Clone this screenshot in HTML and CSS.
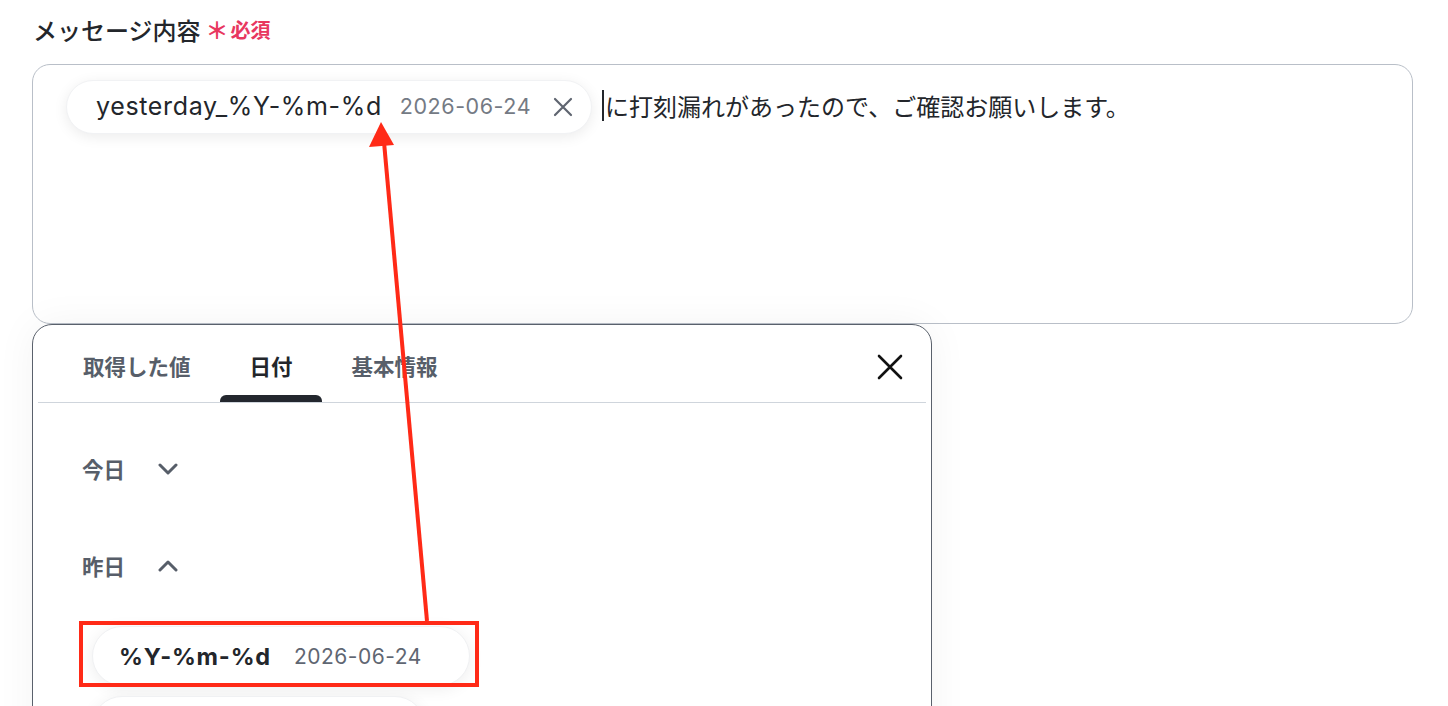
FILE: index.html
```html
<!DOCTYPE html>
<html lang="ja">
  <head>
    <meta charset="UTF-8" />
    <meta name="viewport" content="width=device-width, initial-scale=1.0" />
    <title>メッセージ内容</title>
    <link rel="stylesheet" href="styles.css">
  </head>

  <body>
    <div class="form-field">
      <div class="field-label">
        メッセージ内容
        <span class="required"><span class="required-mark">＊</span>必須</span>
      </div>

      <div class="editor">
        <div class="editor-line">
          <span class="token-chip">
            <span class="token-name">yesterday_%Y-%m-%d</span>
            <span class="token-value">2026-06-24</span>
            <button class="token-remove" aria-label="削除">
              <svg width="20" height="20" viewBox="0 0 20 20">
                <path d="M2 2 L18 18 M18 2 L2 18" stroke="currentColor" stroke-width="2.2" stroke-linecap="round" fill="none" />
              </svg>
            </button>
          </span>
          <span class="caret"></span>
          <span class="editor-text">に打刻漏れがあったので、ご確認お願いします。</span>
        </div>
      </div>

      <div class="picker">
        <div class="picker-head">
          <div class="tabs">
            <button class="tab"><span class="tab-label">取得した値</span><span class="tab-bar"></span></button>
            <button class="tab active"><span class="tab-label">日付</span><span class="tab-bar"></span></button>
            <button class="tab"><span class="tab-label">基本情報</span><span class="tab-bar"></span></button>
          </div>
          <button class="picker-close" aria-label="閉じる">
            <svg width="26" height="26" viewBox="0 0 26 26">
              <path d="M2 2 L24 24 M24 2 L2 24" stroke="currentColor" stroke-width="2.6" stroke-linecap="round" fill="none" />
            </svg>
          </button>
        </div>

        <div class="picker-body">
          <div class="group">
            <div class="group-head">
              今日
              <svg class="chevron" width="20" height="12" viewBox="0 0 20 12">
                <path d="M2 2 L10 10 L18 2" stroke="currentColor" stroke-width="3" stroke-linecap="round" stroke-linejoin="round" fill="none" />
              </svg>
            </div>
          </div>

          <div class="group">
            <div class="group-head">
              昨日
              <svg class="chevron" width="20" height="12" viewBox="0 0 20 12">
                <path d="M2 10 L10 2 L18 10" stroke="currentColor" stroke-width="3" stroke-linecap="round" stroke-linejoin="round" fill="none" />
              </svg>
            </div>
            <div class="group-items">
              <button class="value-chip">
                <span class="value-format">%Y-%m-%d</span>
                <span class="value-sample">2026-06-24</span>
              </button>
              <button class="value-chip next" aria-label="%Y%m%d"></button>
            </div>
          </div>
        </div>
      </div>
    </div>

    <!-- callout: highlighted item and where it ends up -->
    <svg class="callout" width="1448" height="706" viewBox="0 0 1448 706">
      <rect x="81" y="623" width="396" height="62" fill="none" stroke="#ff2a17" stroke-width="4" />
      <line x1="427" y1="621" x2="384" y2="142" stroke="#ff2a17" stroke-width="4" />
      <polygon points="381,122 369,147 394,145" fill="#ff2a17" />
    </svg>
  </body>
</html>
```

FILE: styles.css
```css
html,
body {
  margin: 0;
  height: 706px;
  overflow: hidden;
}

body {
  position: relative;
  font-family: Inter, "Noto Sans CJK JP", sans-serif;
  background-color: #fff;
  color: #23262b;
}

button {
  font: inherit;
  border: none;
  background: none;
  padding: 0;
  cursor: pointer;
}

.form-field {
  padding: 14px 35px 0 32px;
}

.field-label {
  display: flex;
  align-items: center;
  font-family: "Noto Sans CJK JP", sans-serif;
  font-size: 24px;
  font-weight: 500;
  line-height: 31px;
  padding-left: 1px;
}

.required {
  display: flex;
  align-items: center;
  margin-left: 5px;
  font-size: 20px;
  font-weight: 700;
  color: #e8375f;
}

.required-mark {
  font-size: 23px;
  margin-right: 2px;
}

/* editor box */
.editor {
  margin-top: 19px;
  height: 260px;
  box-sizing: border-box;
  border: 1px solid #b9bfc8;
  border-radius: 18px;
  padding: 15px 33px;
}

.editor-line {
  display: flex;
  align-items: center;
}

.token-chip {
  display: inline-flex;
  align-items: center;
  height: 54px;
  box-sizing: border-box;
  padding: 0 18px 2px 29px;
  border-radius: 27px;
  background-color: #fff;
  box-shadow: 0 3px 14px rgba(0, 0, 0, 0.08);
  border: 1px solid #f1f2f4;
}

.token-name {
  font-size: 25px;
  letter-spacing: 0.65px;
  color: #23262b;
}

.token-value {
  margin-left: 18px;
  font-size: 21.5px;
  letter-spacing: 0.55px;
  color: #747a84;
}

.token-remove {
  display: flex;
  margin: 2px 0 0 22px;
  color: #5f6570;
}

.caret {
  width: 2px;
  height: 31px;
  margin: 0 0 4px 10px;
  background-color: #23262b;
}

.editor-text {
  margin: 0 0 4px 1px;
  font-family: "Noto Sans CJK JP", sans-serif;
  font-size: 24px;
  color: #23262b;
}

/* value picker */
.picker {
  width: 900px;
  height: 420px;
  box-sizing: border-box;
  border: 1px solid #5a616c;
  border-radius: 20px 20px 0 0;
  background-color: #fff;
  box-shadow: 0 0 40px rgba(0, 0, 0, 0.05);
}

.picker-head {
  display: flex;
  justify-content: space-between;
  margin: 0 5px;
  border-bottom: 1px solid #cfd5dc;
}

.tabs {
  display: flex;
  padding-left: 15px;
}

.tab {
  display: flex;
  flex-direction: column;
  align-items: stretch;
  padding: 26px 29px 0 30px;
  font-family: "Noto Sans CJK JP", sans-serif;
  font-size: 21.5px;
  font-weight: 700;
  color: #575e69;
}

.tab-label {
  line-height: 30px;
  text-align: center;
}

.tab-bar {
  height: 7px;
  margin: 14px -29px 0 -30px;
  border-radius: 6px 6px 0 0;
}

.tab.active {
  color: #23262b;
}

.tab.active .tab-bar {
  background-color: #23272e;
}

.picker-close {
  display: flex;
  align-self: flex-start;
  margin: 29px 23px 0 0;
  color: #111;
}

.picker-body {
  padding-left: 49px;
}

.group-head {
  display: flex;
  align-items: center;
  padding: 51px 0 16px;
  font-family: "Noto Sans CJK JP", sans-serif;
  font-size: 21.5px;
  font-weight: 700;
  line-height: 30px;
  color: #575e69;
}

.chevron {
  margin-left: 33px;
  color: #575e69;
}

.group-items {
  display: flex;
  flex-direction: column;
  align-items: flex-start;
  gap: 10px;
  padding: 29px 0 0 10px;
}

.value-chip {
  display: flex;
  align-items: center;
  height: 60px;
  box-sizing: border-box;
  padding: 0 47px 0 26px;
  border-radius: 30px;
  background-color: #fff;
  border: 1px solid #f0f1f3;
  box-shadow: 0 3px 16px rgba(0, 0, 0, 0.07);
}

.value-chip.next {
  width: 333px;
}

.value-format {
  font-size: 23.5px;
  font-weight: 700;
  letter-spacing: 0.8px;
  color: #23262b;
}

.value-sample {
  margin-left: 23px;
  font-size: 21px;
  letter-spacing: 0.5px;
  color: #5f6672;
}

/* overlay drawn on top of the form */
.callout {
  position: absolute;
  left: 0;
  top: 0;
  pointer-events: none;
}
```
